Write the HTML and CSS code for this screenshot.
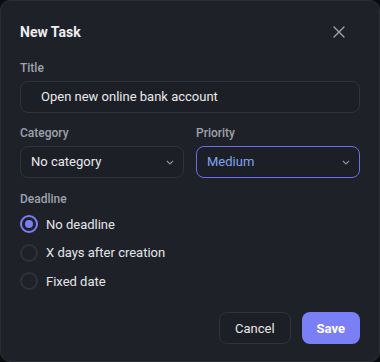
FILE: index.html
```html
<!DOCTYPE html>
<html lang="en">

<head>
    <meta charset="UTF-8">
    <meta name="viewport" content="width=device-width, initial-scale=1.0">
    <title>New Task</title>
    <link rel="stylesheet" href="styles.css">
</head>

<body>
    <div class="dialog">
        <div class="header">
            <h2>New Task</h2>
            <button class="close" aria-label="Close">
                <svg width="12" height="12" viewBox="0 0 12 12">
                    <path d="M1 1L11 11M11 1L1 11" stroke="#a3a7b0" stroke-width="1.3" stroke-linecap="round" />
                </svg>
            </button>
        </div>

        <div class="field">
            <label>Title</label>
            <div class="input title-input">Open new online bank account</div>
        </div>

        <div class="row">
            <div class="field">
                <label>Category</label>
                <div class="input select">
                    <span>No category</span>
                    <svg width="8" height="5" viewBox="0 0 8 5"><path d="M1 1l3 3 3-3" fill="none" stroke="#8d919a" stroke-width="1.1" /></svg>
                </div>
            </div>
            <div class="field">
                <label>Priority</label>
                <div class="input select focused">
                    <span>Medium</span>
                    <svg width="8" height="5" viewBox="0 0 8 5"><path d="M1 1l3 3 3-3" fill="none" stroke="#8d919a" stroke-width="1.1" /></svg>
                </div>
            </div>
        </div>

        <div class="field">
            <label>Deadline</label>
            <div class="radios">
                <div class="radio checked"><span class="dot"></span>No deadline</div>
                <div class="radio"><span class="dot"></span>X days after creation</div>
                <div class="radio"><span class="dot"></span>Fixed date</div>
            </div>
        </div>

        <div class="actions">
            <button class="btn cancel">Cancel</button>
            <button class="btn save">Save</button>
        </div>
    </div>
</body>

</html>
```

FILE: styles.css
```css
body {
    margin: 0;
    padding: 0;
    background: #0b0c0f;
    font-family: Roboto, "Noto Sans", sans-serif;
    color: #e4e6ea;
}

.dialog {
    width: 380px;
    height: 362px;
    box-sizing: border-box;
    background: #1f2129;
    border: 1px solid #2b2e37;
    border-radius: 10px;
    padding: 18px 19px 17px 19px;
    display: flex;
    flex-direction: column;
}

.header {
    display: flex;
    justify-content: space-between;
    align-items: center;
    height: 26px;
    margin-bottom: 15px;
}

h2 {
    margin: 0;
    font-size: 14px;
    font-weight: 700;
    color: #eceef1;
}

.close {
    background: none;
    border: none;
    padding: 0;
    margin-right: 15px;
    display: flex;
}

label {
    display: block;
    font-size: 12px;
    font-weight: 500;
    color: #9ea2ab;
    margin-bottom: 4px;
    line-height: 17px;
}

.field {
    margin-bottom: 12px;
}

.input {
    height: 32px;
    box-sizing: border-box;
    border: 1px solid #30333c;
    border-radius: 8px;
    background: #1d1f26;
    font-size: 13px;
    line-height: 30px;
    color: #e8e9ec;
}

.title-input {
    padding-left: 20px;
}

.row {
    display: grid;
    grid-template-columns: 1fr 1fr;
    gap: 12px;
}

.row .field {
    margin-bottom: 13px;
}

.select {
    display: flex;
    justify-content: space-between;
    align-items: center;
    padding: 0 9px 0 10px;
}

.focused {
    border-color: #6b6cf0;
}

.focused span {
    color: #7fa3ee;
}

.radios {
    display: flex;
    flex-direction: column;
    gap: 10.5px;
    margin-top: 7px;
}

.radio {
    display: flex;
    align-items: center;
    gap: 8px;
    font-size: 13px;
    height: 18px;
    color: #e4e6ea;
}

.dot {
    width: 18px;
    height: 18px;
    box-sizing: border-box;
    border: 2px solid #2f323b;
    border-radius: 50%;
    display: flex;
    align-items: center;
    justify-content: center;
}

.checked .dot {
    border-color: #7b7ef5;
}

.checked .dot::after {
    content: "";
    width: 8px;
    height: 8px;
    border-radius: 50%;
    background: #7b7ef5;
}

.actions {
    margin-top: auto;
    display: flex;
    justify-content: flex-end;
    gap: 11px;
}

.btn {
    height: 32px;
    border-radius: 8px;
    font-family: inherit;
    font-size: 13px;
    padding: 0 15px;
}

.cancel {
    background: #1d1f26;
    border: 1px solid #30333c;
    color: #e4e6ea;
}

.save {
    background: #7b7ff6;
    border: none;
    color: #fff;
    font-weight: 700;
}
```
